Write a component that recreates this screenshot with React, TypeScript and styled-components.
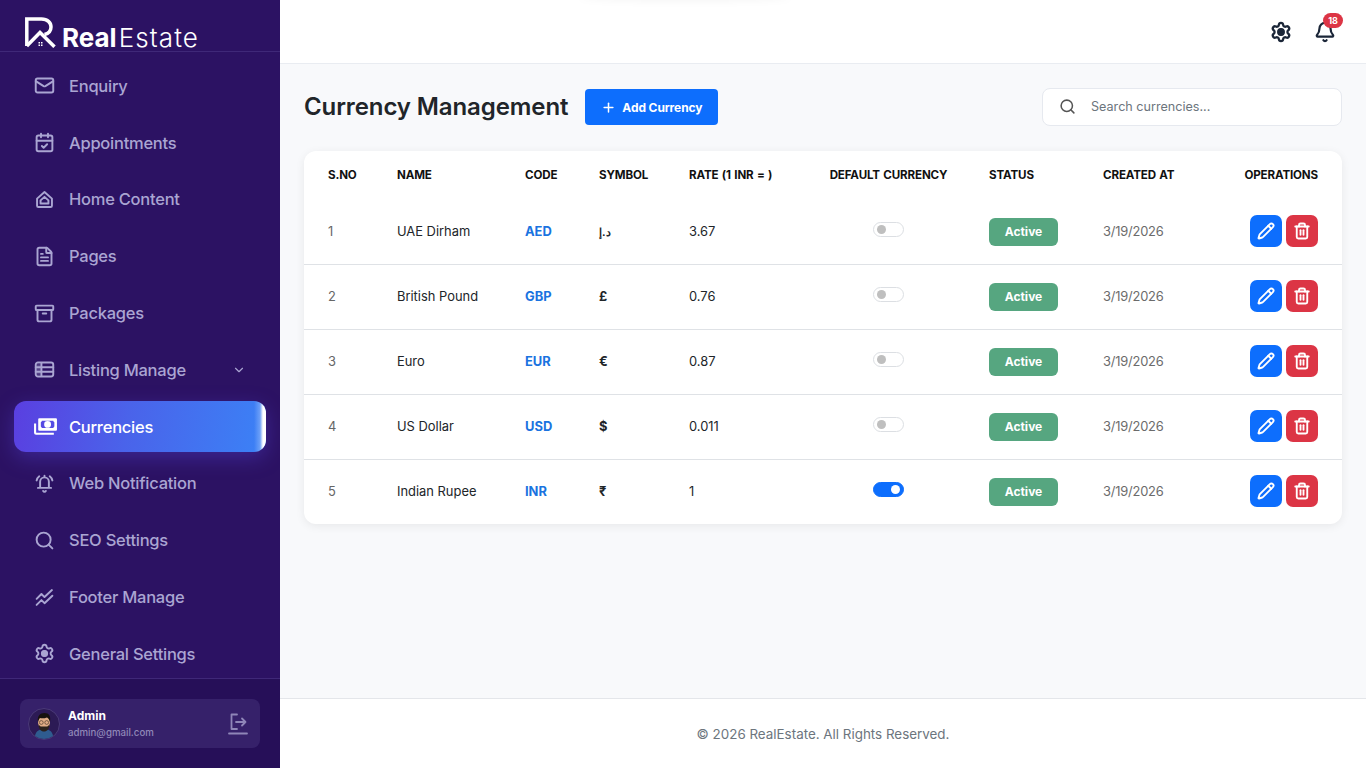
import React from "react";
import styled, { createGlobalStyle } from "styled-components";
import { Mail, CalendarCheck, FileText, Archive, Search, Settings, ChevronDown, Plus, Bell, Pencil, Trash2 } from "lucide-react";

const Global = createGlobalStyle`
  html, body { margin: 0; padding: 0; height: 100%; }
  body { font-family: Inter, "Noto Sans", sans-serif; background: #f8f9fb; overflow: hidden; }
  * { box-sizing: border-box; }
`;

const Shell = styled.div`display: flex; width: 100%; height: 100vh;`;
const Sidebar = styled.aside`width: 280px; flex: none; display: flex; flex-direction: column; background: #2c1263; height: 100%;`;
const Brand = styled.div`height: 52px; flex: none; padding: 17px 0 0 25px; display: flex; align-items: flex-start; gap: 5px; border-bottom: 1px solid #3f2878;`;
const BrandText = styled.span`font-family: Inter, sans-serif; color: #fff; font-size: 26px; line-height: 26px; margin-top: 8px; letter-spacing: 0; white-space: nowrap;`;
const BrandBold = styled.b`font-weight: 700;`;
const BrandLight = styled.span`font-weight: 300; letter-spacing: 1.1px; margin-left: 2px;`;
const Nav = styled.nav`flex: 1; min-height: 0; padding: 8.4px 14px 0; display: flex; flex-direction: column; gap: 5.8px; overflow: hidden;`;
const NavItem = styled.a<{ $active?: boolean }>`
  position: relative; flex: none; height: 51px; display: flex; align-items: center; gap: ${p => (p.$active ? "11px" : "14px")};
  padding-left: ${p => (p.$active ? "19px" : "20px")}; border-radius: 12px; overflow: visible;
  font-size: 16.5px; font-weight: 500; letter-spacing: -0.25px;
  color: ${p => (p.$active ? "#fff" : "#aaa5d2")};
  background: ${p => (p.$active ? "linear-gradient(100deg, #5a3fe0 0%, #4a63ea 45%, #3b82f6 100%)" : "transparent")};
  box-shadow: ${p => (p.$active ? "0 6px 20px rgba(84, 70, 225, 0.38)" : "none")};
  svg { flex: none; }
`;
const ActiveEdge = styled.i`position: absolute; right: 0; top: 0; bottom: 0; width: 12px; border-radius: 0 12px 12px 0; background: linear-gradient(90deg, rgba(255,255,255,0) 0%, rgba(255,255,255,.25) 50%, #fff 75%);`;
const NavCaret = styled.span`margin-left: auto; margin-right: 20px; display: flex;`;
const SideFoot = styled.div`height: 90px; flex: none; background: #260f58; border-top: 1px solid #3f2878; padding: 20px 20px 0;`;
const UserCard = styled.div`height: 49px; border-radius: 8px; background: #36216a; display: flex; align-items: center; padding: 0 10px 0 8px;`;
const Avatar = styled.svg`width: 32px; height: 32px; flex: none; margin-right: 8px;`;
const UserInfo = styled.div`flex: 1; display: flex; flex-direction: column; gap: 3px;`;
const UserName = styled.div`color: #fff; font-size: 12px; font-weight: 700; line-height: 15px;`;
const UserMail = styled.div`color: #9088b8; font-size: 9.7px; font-weight: 500; line-height: 13px;`;

const Main = styled.main`flex: 1; min-width: 0; display: flex; flex-direction: column; height: 100%;`;
const Topbar = styled.header`position: relative; height: 64px; flex: none; background: #fff; border-bottom: 1px solid #e9ecf1; display: flex; align-items: center; justify-content: flex-end; gap: 22px; padding: 0 30px 0 0; color: #1b2638;`;
const TopGlow = styled.i`position: absolute; left: 300px; top: -6px; width: 210px; height: 8px; border-radius: 50%; background: rgba(0,0,0,.035); filter: blur(3px);`;
const BellWrap = styled.div`position: relative; display: flex;`;
const Count = styled.span`position: absolute; right: -7px; top: -8px; width: 20px; height: 15px; border-radius: 8px; background: #dc3545; color: #fff; font-size: 9px; font-weight: 700; display: flex; align-items: center; justify-content: center;`;
const Content = styled.section`flex: 1; min-height: 0; padding: 24px 24px 0;`;
const HeadRow = styled.div`display: flex; align-items: center; height: 38px; margin-bottom: 25px;`;
const Title = styled.h1`margin: 0 17px 0 0; font-size: 24px; line-height: 32px; font-weight: 600; color: #212529; letter-spacing: -0.1px; white-space: nowrap;`;
const AddBtn = styled.button`height: 36px; width: 133px; border: 0; border-radius: 4px; background: #0d6efd; color: #fff; font: 700 12px Inter, sans-serif; letter-spacing: -0.1px; display: flex; align-items: center; justify-content: center; gap: 6px; padding: 0;`;
const SearchBox = styled.div`margin-left: auto; width: 300px; height: 38px; background: #fff; border: 1px solid #e6e9ef; border-radius: 8px; display: flex; align-items: center; gap: 15px; padding: 0 0 2px 16px; color: #6c757d; font-size: 12.6px; font-weight: 400; svg { color: #555; }`;
const Card = styled.div`background: #fff; border-radius: 12px; box-shadow: 0 2px 10px rgba(0,0,0,.07); overflow: hidden;`;
const Table = styled.table`width: 100%; border-collapse: separate; border-spacing: 0; table-layout: fixed;`;
const Col = styled.col<{ $w: number }>`width: ${p => p.$w}px;`;
const Th = styled.th<{ $align?: string }>`height: 49px; padding: 0 12px 2px; font-size: 11.6px; font-weight: 700; color: #111; text-align: ${p => p.$align || "left"}; text-transform: uppercase; letter-spacing: -0.15px; word-spacing: 0.8px; white-space: nowrap; &:first-child { padding-left: 24px; } &:last-child { padding-right: 24px; }`;
const Tr = styled.tr`
  td { border-bottom: 1px solid #dfe2e6; height: 65px; }
  &:last-child td { border-bottom: 0; height: 64px; }
`;
const Td = styled.td<{ $tone?: string; $strong?: boolean; $align?: string }>`padding: 0 12px 1px; font-size: 12.9px; color: ${p => p.$tone || "#212529"}; font-weight: ${p => (p.$strong ? 700 : 400)}; text-align: ${p => p.$align || "left"}; &:first-child { padding-left: 24px; } &:last-child { padding-right: 24px; }`;
const DateText = styled.span`letter-spacing: -0.2px;`;
const Dirham = styled.span`font-size: 10.5px;`;
const Toggle = styled.span<{ $on?: boolean }>`display: inline-flex; align-items: center; justify-content: ${p => (p.$on ? "flex-end" : "flex-start")}; width: 31px; height: 15px; padding: 0 3px; margin-bottom: 5px; vertical-align: middle; border-radius: 8px; background: ${p => (p.$on ? "#0d6efd" : "#fff")}; border: 1px solid ${p => (p.$on ? "#0d6efd" : "#dcdfe3")};`;
const Knob = styled.i<{ $on?: boolean }>`width: 9px; height: 9px; border-radius: 50%; background: ${p => (p.$on ? "#fff" : "#bfbfbf")};`;
const Badge = styled.span`display: inline-flex; align-items: center; justify-content: center; width: 69px; height: 28px; border-radius: 6px; background: #56a680; color: #fff; font-size: 12px; font-weight: 700; vertical-align: middle;`;
const Ops = styled.div`display: flex; justify-content: flex-end; gap: 4px; margin-bottom: 2px;`;
const IconBtn = styled.button<{ $bg: string }>`width: 32px; height: 32px; border: 0; padding: 0; border-radius: 7px; color: #fff; background: ${p => p.$bg}; display: flex; align-items: center; justify-content: center;`;
const Foot = styled.footer`height: 70px; flex: none; background: #fff; border-top: 1px solid #e4e6ea; display: flex; align-items: center; justify-content: center; color: #6c757d; font-size: 13.4px;`;

const ico = { viewBox: "0 0 24 24", width: 21, height: 21, fill: "none", stroke: "currentColor", strokeWidth: 2.2, strokeLinecap: "round" as const, strokeLinejoin: "round" as const };
const HomeIcon = () => <svg {...ico}><path d="M3.500 11 12 3.500l8.500 7.500v8a1.500 1.500 0 0 1-1.500 1.500H5A1.500 1.500 0 0 1 3.500 19z"/><path d="M7.500 16.500V13L12 9l4.500 4v3.500z"/></svg>;
const ListIcon = () => <svg {...ico}><rect x="2" y="4" width="20" height="16" rx="2.500"/><path d="M2 9.500h20M2 14.500h20M8.500 4.500v15" /><path d="M3 6v12h5V6z" fill="currentColor" stroke="none" opacity=".35"/></svg>;
const MoneyIcon = () => <svg viewBox="0 0 24 24" width="25" height="25" fill="currentColor"><path fillRule="evenodd" d="M6 4h16a1 1 0 0 1 1 1v10a1 1 0 0 1-1 1H6a1 1 0 0 1-1-1V5a1 1 0 0 1 1-1zm2.500 2.500A2 2 0 0 1 7.500 8v4a2 2 0 0 1 1 1.500h11a2 2 0 0 1 1-1.500V8a2 2 0 0 1-1-1.500zM14 6.800a3.300 3.200 0 1 1 0 6.400 3.300 3.200 0 0 1 0-6.400z"/><path d="M1 9h2v8.500a.5.5 0 0 0 .5.5H20v2H3a2 2 0 0 1-2-2z"/></svg>;
const TrendIcon = () => <svg {...ico}><path d="M3 13.500 8.500 8 12 11.500 20.500 3.500M3 20.500 8.500 15 12 18.500 21 10"/></svg>;
const AlarmIcon = () => <svg {...ico}><path d="M7 16.500V10a5 5 0 0 1 10 0v6.500M4.500 17h15M10.500 20.500a1.700 1.700 0 0 0 3 0M3 8.500C3.500 6.500 4.500 5 6 3.800M21 8.500C20.500 6.500 19.500 5 18 3.800M12 3v2"/></svg>;
const LogoutIcon = () => <svg viewBox="0 0 24 24" width="24" height="24" fill="none" stroke="#8f86b8" strokeWidth="1.800" strokeLinecap="round" strokeLinejoin="round"><path d="M11 2.500H5.500v14.500H11M10 10h9.500M16 6.500l3.500 3.500-3.500 3.500M3 21.500h18"/></svg>;
const Logo = () => (
  <svg viewBox="0 0 32 31" width="32" height="31" fill="none" stroke="#fff" strokeWidth="3.500">
    <path d="M1.800 29V2h14.700c6 0 9.500 3.700 9.500 8 0 4-2.500 6.500-6.500 7.500" />
    <path d="M1.800 29 15 15.500 29.500 29.800" strokeLinejoin="miter"/>
    <path d="M13.500 25h1.500v1.500h-1.500zM16 25h1.500v1.500H16zM13.500 27.500h1.500V29h-1.500zM16 27.500h1.500V29H16z" stroke="none" fill="#fff"/>
  </svg>
);
const AvatarArt = () => (
  <Avatar viewBox="0 0 32 32">
    <circle cx="16" cy="16" r="15.500" fill="#2c1a55" stroke="#4a3a78"/>
    <path d="M7 28c1-5 4-7 9-7s8 2 9 7a15 15 0 0 1-18 0z" fill="#2f5c8f"/>
    <ellipse cx="16" cy="14.500" rx="6" ry="7" fill="#e0ac86"/>
    <path d="M10 14c-1-6 2-9 6.500-9S23 8 22 14c-1-3-2-4-3-4.500-2 1-6 1-7 .5-1 1-1.500 2-2 4z" fill="#17120f"/>
    <path d="M10.500 16c0 5 2.500 7.500 5.500 7.500s5.500-2.500 5.500-7.500c-1 2-2 2.500-3 2.500h-5c-1 0-2-.5-3-2.500z" fill="#2b211c"/>
    <circle cx="13.300" cy="14.500" r="1.900" fill="none" stroke="#3a2a20" strokeWidth=".6"/>
    <circle cx="18.700" cy="14.500" r="1.900" fill="none" stroke="#3a2a20" strokeWidth=".6"/>
  </Avatar>
);

const nav: { label: string; icon: React.ReactNode; caret?: boolean; active?: boolean }[] = [
  { label: "Enquiry", icon: <Mail size={21} strokeWidth={2.2} /> },
  { label: "Appointments", icon: <CalendarCheck size={21} strokeWidth={2.2} /> },
  { label: "Home Content", icon: <HomeIcon /> },
  { label: "Pages", icon: <FileText size={21} strokeWidth={2.2} /> },
  { label: "Packages", icon: <Archive size={21} strokeWidth={2.2} /> },
  { label: "Listing Manage", icon: <ListIcon />, caret: true },
  { label: "Currencies", icon: <MoneyIcon />, active: true },
  { label: "Web Notification", icon: <AlarmIcon /> },
  { label: "SEO Settings", icon: <Search size={21} strokeWidth={2.2} /> },
  { label: "Footer Manage", icon: <TrendIcon /> },
  { label: "General Settings", icon: <Settings size={21} strokeWidth={2.2}><circle cx="12" cy="12" r="2.500" fill="currentColor" /></Settings> },
];

const rows = [
  { n: 1, name: "UAE Dirham", code: "AED", sym: <Dirham>د.إ</Dirham>, rate: "3.67" },
  { n: 2, name: "British Pound", code: "GBP", sym: "£", rate: "0.76" },
  { n: 3, name: "Euro", code: "EUR", sym: "€", rate: "0.87" },
  { n: 4, name: "US Dollar", code: "USD", sym: "$", rate: "0.011" },
  { n: 5, name: "Indian Rupee", code: "INR", sym: "₹", rate: "1", on: true },
];

export default function App() {
  return (
    <Shell>
      <Global />
      <Sidebar>
        <Brand>
          <Logo />
          <BrandText><BrandBold>Real</BrandBold><BrandLight>Estate</BrandLight></BrandText>
        </Brand>
        <Nav>
          {nav.map(i => (
            <NavItem key={i.label} $active={i.active}>
              {i.icon}
              {i.label}
              {i.caret && <NavCaret><ChevronDown size={14} /></NavCaret>}
              {i.active && <ActiveEdge />}
            </NavItem>
          ))}
        </Nav>
        <SideFoot>
          <UserCard>
            <AvatarArt />
            <UserInfo>
              <UserName>Admin</UserName>
              <UserMail>admin@gmail.com</UserMail>
            </UserInfo>
            <LogoutIcon />
          </UserCard>
        </SideFoot>
      </Sidebar>
      <Main>
        <Topbar>
          <TopGlow />
          <Settings size={22} strokeWidth={2.5}><circle cx="12" cy="12" r="2.500" fill="currentColor" /></Settings>
          <BellWrap>
            <Bell size={22} strokeWidth={2.4} />
            <Count>18</Count>
          </BellWrap>
        </Topbar>
        <Content>
          <HeadRow>
            <Title>Currency Management</Title>
            <AddBtn><Plus size={15} strokeWidth={2.4} />Add Currency</AddBtn>
            <SearchBox><Search size={17} strokeWidth={2.2} />Search currencies...</SearchBox>
          </HeadRow>
          <Card>
            <Table>
              <colgroup>
                {[81, 128, 74, 90, 123, 177, 114, 140, 111].map((w, i) => <Col key={i} $w={w} />)}
              </colgroup>
              <thead>
                <tr>
                  <Th>S.No</Th><Th>Name</Th><Th>Code</Th><Th>Symbol</Th><Th>Rate (1 INR = )</Th>
                  <Th $align="center">Default Currency</Th><Th>Status</Th><Th>Created At</Th><Th $align="right">Operations</Th>
                </tr>
              </thead>
              <tbody>
                {rows.map(r => (
                  <Tr key={r.n}>
                    <Td $tone="#666">{r.n}</Td>
                    <Td>{r.name}</Td>
                    <Td $tone="#1a73e0" $strong>{r.code}</Td>
                    <Td $strong>{r.sym}</Td>
                    <Td>{r.rate}</Td>
                    <Td $align="center"><Toggle $on={r.on}><Knob $on={r.on} /></Toggle></Td>
                    <Td><Badge>Active</Badge></Td>
                    <Td $tone="#6b6b6b"><DateText>3/19/2026</DateText></Td>
                    <Td>
                      <Ops>
                        <IconBtn $bg="#0d6efd"><Pencil size={18} strokeWidth={2.5} /></IconBtn>
                        <IconBtn $bg="#dc3545"><Trash2 size={18} strokeWidth={2.5} /></IconBtn>
                      </Ops>
                    </Td>
                  </Tr>
                ))}
              </tbody>
            </Table>
          </Card>
        </Content>
        <Foot>© 2026 RealEstate. All Rights Reserved.</Foot>
      </Main>
    </Shell>
  );
}
